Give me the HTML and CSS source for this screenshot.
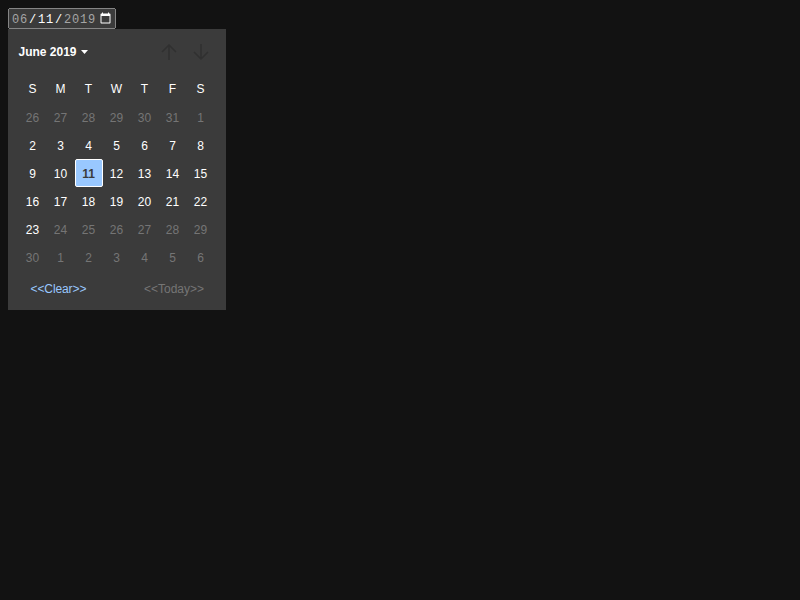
FILE: index.html
```html
<!DOCTYPE html>
<html lang="en">
<head>
<meta charset="utf-8">
<title>Date picker</title>
<link rel="stylesheet" href="styles.css">
</head>
<body>
<input class="date-field" type="date" value="2019-06-11" min="2019-06-02" max="2019-06-23">
<section class="picker">
  <header class="toolbar">
    <div class="month">June 2019<svg class="caret" width="7" height="4" viewBox="0 0 7 4"><path d="M0 0h7L3.5 4z"/></svg></div>
    <div class="nav">
      <svg width="16" height="18" viewBox="0 0 16 18"><path d="M9 17V2M2 9l7-7 7 7"/></svg>
      <svg width="16" height="18" viewBox="0 0 16 18"><path d="M9 1v15M2 9l7 7 7-7"/></svg>
    </div>
  </header>
  <div class="grid week">
    <span>S</span><span>M</span><span>T</span><span>W</span><span>T</span><span>F</span><span>S</span>
  </div>
  <div class="grid days">
    <span class="off">26</span><span class="off">27</span><span class="off">28</span><span class="off">29</span><span class="off">30</span><span class="off">31</span><span class="off">1</span>
    <span>2</span><span>3</span><span>4</span><span>5</span><span>6</span><span>7</span><span>8</span>
    <span>9</span><span>10</span><span class="selected">11</span><span>12</span><span>13</span><span>14</span><span>15</span>
    <span>16</span><span>17</span><span>18</span><span>19</span><span>20</span><span>21</span><span>22</span>
    <span>23</span><span class="off">24</span><span class="off">25</span><span class="off">26</span><span class="off">27</span><span class="off">28</span><span class="off">29</span>
    <span class="off">30</span><span class="off">1</span><span class="off">2</span><span class="off">3</span><span class="off">4</span><span class="off">5</span><span class="off">6</span>
  </div>
  <footer class="actions"><span class="clear">&lt;&lt;Clear&gt;&gt;</span><span class="off">&lt;&lt;Today&gt;&gt;</span></footer>
</section>
</body>
</html>
```
FILE: styles.css
```css
:root { color-scheme: dark; }
body {
  margin: 8px;
  background: #121212;
  font: 12px/14px "Liberation Sans", Arial, sans-serif;
}
.date-field {
  display: block;
  box-sizing: border-box;
  width: 108px;
  height: 21px;
  margin: 0;
  font-family: "Liberation Mono", monospace;
}
.date-field::-webkit-datetime-edit {
  padding-top: 2px;
  font-size: 12px;
  letter-spacing: 0.8px;
}
.picker {
  box-sizing: border-box;
  width: 218px;
  height: 281px;
  background: #3b3b3b;
  color: #fff;
  padding: 0 11px;
}
.toolbar { display: flex; justify-content: space-between; align-items: center; height: 46px; }
.month { display: flex; align-items: center; font-weight: 700; margin-left: -0.5px; }
.caret { margin-left: 4.5px; fill: #fff; }
.nav { display: flex; gap: 16px; padding-right: 7px; }
.nav svg { fill: none; stroke: #303030; stroke-width: 1.5; overflow: visible; }
.grid { display: grid; grid-template-columns: repeat(7, 28px); }
.grid span { display: flex; align-items: center; justify-content: center; height: 28px; box-sizing: border-box; padding-right: 1px; }
.days span { padding-top: 2px; }
.off { color: #757575; }
.grid .selected {
  background: #99c8ff;
  border: 1px solid #fff;
  border-radius: 2px;
  color: #3b3b3b;
  font-weight: 700;
}
.actions { display: flex; justify-content: space-between; padding: 11px 11px 0 11.5px; }
.clear { color: #99c8ff; letter-spacing: -0.1px; }
```
